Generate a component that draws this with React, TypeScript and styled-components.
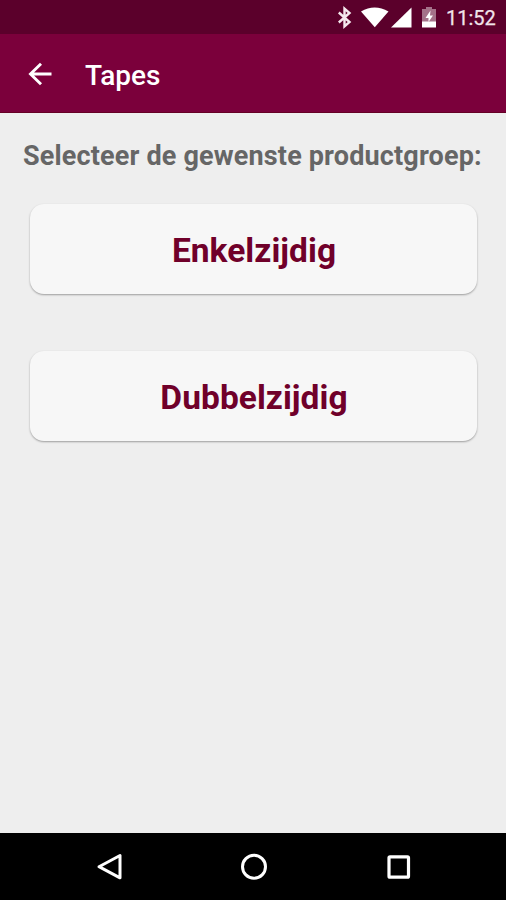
import React from "react";
import styled, { createGlobalStyle } from "styled-components";

const GlobalStyle = createGlobalStyle`
  * { box-sizing: border-box; }
  body { margin: 0; background: #eeeeee; font-family: Roboto, "Liberation Sans", sans-serif; }
`;

const Screen = styled.div`
  display: flex;
  flex-direction: column;
  height: 900px;
  width: 506px;
  background: #eeeeee;
  overflow: hidden;
`;

const StatusBar = styled.div`
  display: flex;
  align-items: center;
  justify-content: flex-end;
  height: 34px;
  flex: none;
  padding-right: 10px;
  background: #5b002b;
`;

const StatusIcons = styled.svg`
  flex: none;
  display: block;
`;

const Clock = styled.span`
  width: 50px;
  margin-left: 8px;
  padding-top: 2px;
  font-size: 20px;
  line-height: 24px;
  color: #f1e4ea;
  -webkit-text-stroke: 0.25px #f1e4ea;
  white-space: nowrap;
`;

const AppBar = styled.header`
  display: flex;
  align-items: center;
  flex: none;
  height: 79px;
  padding: 5px 0 0 28px;
  background: #7b003b;
  border-bottom: 1px solid #650025;
`;

const BackButton = styled.button`
  display: flex;
  width: 57px;
  padding: 0 0 4px;
  border: 0;
  background: none;
`;

const Title = styled.h1`
  margin: 0;
  font-size: 28px;
  line-height: 32px;
  font-weight: 500;
  color: #fff;
`;

const Content = styled.main`
  flex: 1;
  padding: 27px 29px 0 30px;
`;

const Heading = styled.h2`
  margin: 0 -7px 32px;
  font-size: 27px;
  line-height: 32px;
  font-weight: 700;
  letter-spacing: 0.16px;
  color: #666;
  white-space: nowrap;
`;

const GroupList = styled.div`
  display: flex;
  flex-direction: column;
  gap: 57px;
`;

const GroupButton = styled.button`
  height: 90px;
  padding: 2px 0 0 1px;
  border: 0;
  border-radius: 14px;
  background: #f7f7f7;
  box-shadow: 0 1px 2px rgba(0, 0, 0, 0.34);
  font-family: inherit;
  font-size: 33.5px;
  font-weight: 700;
  letter-spacing: 0.05px;
  color: #70002a;
`;

const NavBar = styled.nav`
  display: flex;
  align-items: center;
  justify-content: space-between;
  flex: none;
  height: 67px;
  padding: 0 92px 0 94px;
  background: #000;
`;

const NavButton = styled.button`
  display: flex;
  padding: 0;
  border: 0;
  background: none;
`;

const groups = ["Enkelzijdig", "Dubbelzijdig"];

export default function App() {
  return (
    <Screen>
      <GlobalStyle />
      <StatusBar>
        <StatusIcons width="102" height="34" viewBox="336 0 102 34">
          <path d="M338.8 12.5L349.5 22L344.5 26.3V8.7L349.5 13L338.8 22.5" fill="none" stroke="#f5e9ee" strokeWidth="2.4" />
          <path d="M361 11.5Q374.5 3.5 388.5 11.5L374.8 27.3Z" fill="#fff" />
          <path d="M411.5 7.5V27.5H391Z" fill="#fff" />
          <path d="M426 7h6v2h4v13h-14V9h4z" fill="#a47289" />
          <path d="M422 21.5h14v6h-14z" fill="#fff" />
          <path d="M430.5 10.5L425.5 18H428.5V22L433 15.5H430z" fill="#fff" />
        </StatusIcons>
        <Clock>11:52</Clock>
      </StatusBar>
      <AppBar>
        <BackButton aria-label="Terug">
          <svg width="24" height="24" viewBox="0 0 24 24" fill="none" stroke="#fff" strokeWidth="2.9">
            <path d="M23.5 12H3M13 1.8L2.5 12L13 22.2" />
          </svg>
        </BackButton>
        <Title>Tapes</Title>
      </AppBar>
      <Content>
        <Heading>Selecteer de gewenste productgroep:</Heading>
        <GroupList>
          {groups.map((group) => (
            <GroupButton key={group}>{group}</GroupButton>
          ))}
        </GroupList>
      </Content>
      <NavBar>
        <NavButton aria-label="Vorige">
          <svg width="30" height="34" viewBox="94 850 30 34">
            <path d="M120 855.5V877.8L99 866.7Z" fill="none" stroke="#fff" strokeWidth="3" strokeLinejoin="round" />
          </svg>
        </NavButton>
        <NavButton aria-label="Start">
          <svg width="30" height="34" viewBox="239 850 30 34">
            <circle cx="254" cy="866.7" r="11.5" fill="none" stroke="#fff" strokeWidth="3" />
          </svg>
        </NavButton>
        <NavButton aria-label="Recente apps">
          <svg width="30" height="34" viewBox="384 850 30 34">
            <rect x="389" y="856.8" width="19.5" height="20.4" rx="1" fill="none" stroke="#fff" strokeWidth="3.2" />
          </svg>
        </NavButton>
      </NavBar>
    </Screen>
  );
}
